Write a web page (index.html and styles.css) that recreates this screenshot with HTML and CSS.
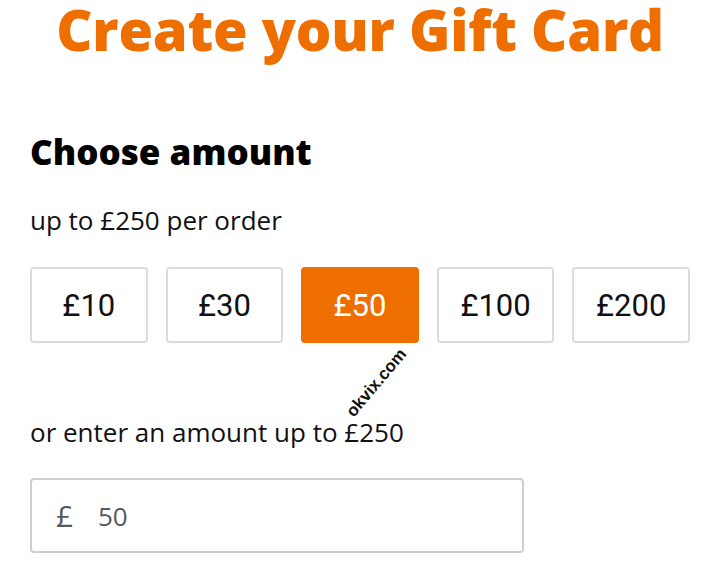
FILE: index.html
```html
<!DOCTYPE html>
<html lang="en">
<head>
<meta charset="utf-8">
<title>Create your Gift Card</title>
<link rel="stylesheet" href="styles.css">
</head>
<body>
<main class="page">
  <h1 class="title">Create your Gift Card</h1>
  <section class="amount">
    <h2 class="amount-heading">Choose amount</h2>
    <p class="amount-note">up to £250 per order</p>
    <div class="options">
      <button class="option">£10</button>
      <button class="option">£30</button>
      <button class="option option-selected">£50</button>
      <button class="option">£100</button>
      <button class="option">£200</button>
    </div>
    <div class="watermark-row"><span class="watermark">okvix.com</span></div>
    <p class="custom-label">or enter an amount up to £250</p>
    <label class="custom-input">
      <span class="currency">£</span>
      <span class="value">50</span>
    </label>
  </section>
</main>
</body>
</html>
```

FILE: styles.css
```css
* { box-sizing: border-box; }
html, body { margin: 0; padding: 0; background: #fff; }
body { font-family: "Open Sans", "DejaVu Sans", sans-serif; color: #111; }
.page { padding: 0 30px; width: 720px; height: 564px; overflow: hidden; }
.title {
  margin: 0;
  padding-top: 0;
  text-align: center;
  color: #ee6e00;
  font-family: "Open Sans", sans-serif;
  font-weight: 800;
  font-size: 56px;
  line-height: 58px;
  letter-spacing: -0.2px;
}
.amount-heading {
  margin: 74px 0 0;
  font-size: 35px;
  line-height: 40px;
  font-weight: 800;
  color: #000;
}
.amount-note {
  margin: 31px 0 0;
  font-size: 26px;
  line-height: 34px;
  font-weight: 400;
  color: #111;
}
.options {
  display: flex;
  gap: 18px;
  margin-top: 30px;
}
.option {
  width: 118px;
  height: 76px;
  border: 2px solid #dcdcdc;
  border-radius: 4px;
  background: #fff;
  font-family: Roboto, sans-serif;
  font-size: 31px;
  color: #111;
  padding: 0;
}
.option-selected {
  background: #ee6e00;
  border-color: #ee6e00;
  color: #fff;
}
.watermark-row { position: relative; height: 72px; }
.watermark {
  position: absolute;
  left: 305px;
  top: 30px;
  transform: rotate(-50deg);
  font-family: "Liberation Sans", Arial, sans-serif;
  font-weight: 700;
  font-size: 17px;
  color: #111;
}
.custom-label {
  margin: 0;
  font-size: 26px;
  line-height: 34px;
  color: #111;
}
.custom-input {
  display: flex;
  align-items: center;
  margin-top: 29px;
  width: 494px;
  height: 75px;
  border: 2px solid #ccced1;
  border-radius: 4px;
  padding-left: 24px;
  font-size: 28px;
  color: #555a5e;
}
.currency { font-size: 30px; width: 42px; }
.value { font-size: 26px; }
```
